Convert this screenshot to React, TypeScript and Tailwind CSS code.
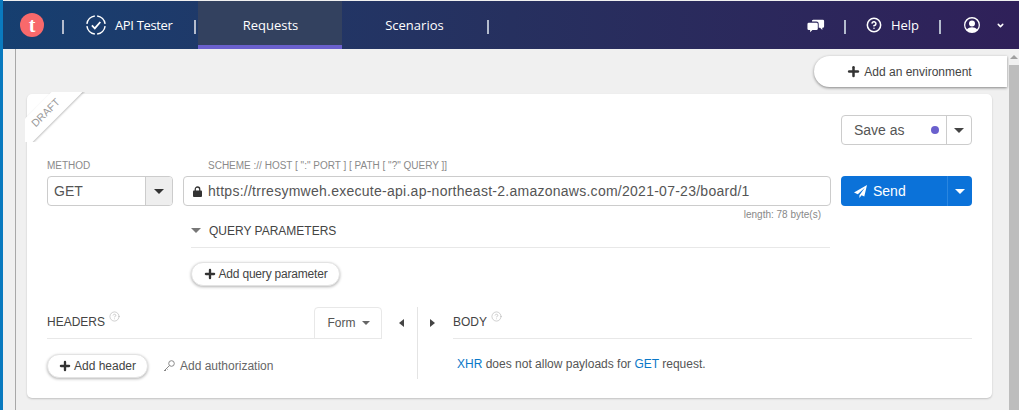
import { ChevronDown, CircleHelp, Plus } from 'lucide-react';

const sans = "font-['Liberation_Sans',Arial,sans-serif]";
const nav = "font-['Open_Sans','Noto_Sans',sans-serif]";

function Caret({ className = '' }: { className?: string }) {
  return <span className={`inline-block w-0 h-0 border-x-[5px] border-x-transparent border-t-[5px] ${className}`} />;
}

function Sep({ className = '' }: { className?: string }) {
  return <span className={`block w-[2px] h-[14px] mt-[3px] bg-[#b4bccd] ${className}`} />;
}

function PillButton({ label, className = '' }: { label: string; className?: string }) {
  return (
    <button className={`flex items-center justify-center gap-[2px] pr-px h-[24px] rounded-full bg-white border border-[#e3e3e3] shadow-[0_1px_3px_rgba(0,0,0,0.3)] text-[#444] text-[12px] ${className}`}>
      <Plus size={14} strokeWidth={4} className="text-[#333]" />
      {label}
    </button>
  );
}

function HelpDot() {
  return <CircleHelp size={11} strokeWidth={1.2} className="text-[#aaa] mb-[9px]" />;
}

function Header() {
  return (
    <header className={`${nav} flex items-center h-[48px] mt-px text-white text-[13px] font-medium bg-gradient-to-r from-[#163f70] via-[#26305f] to-[#2f2059]`}>
      <span className="ml-[17px] w-[24px] h-[24px] rounded-full bg-[#f8696b] flex items-center justify-center font-['Liberation_Serif',serif] font-bold text-[20px] leading-none">t</span>
      <Sep className="ml-[18px]" />
      <svg viewBox="0 0 24 24" width="22" height="22" className="ml-[21px]" fill="none" stroke="white" strokeWidth="1.6">
        <path d="M12 2a10 10 0 0 1 10 10M22 12a10 10 0 0 1-10 10M12 22A10 10 0 0 1 2 12M2 12A10 10 0 0 1 12 2" strokeDasharray="13 2.7" strokeDashoffset="-1.3" />
        <path d="M7.5 12.5l3.2 3.2 6-7" strokeWidth="2" />
      </svg>
      <span className="ml-[8px] pt-px tracking-[-0.35px]">API Tester</span>
      <Sep className="ml-[22px]" />
      <nav className="ml-[2px] flex items-stretch self-stretch">
        <span className="w-[144px] flex items-center justify-center bg-[#33415f] border-b-[4px] border-[#6a60cd] pt-[5px]">Requests</span>
        <span className="w-[144px] flex items-center justify-center pt-px">Scenarios</span>
      </nav>
      <Sep className="ml-px" />
      <div className="ml-auto flex items-center">
        <svg viewBox="0 0 20 16" width="18" height="15" fill="white">
          <path d="M7 1.500h10.500a1.500 1.500 0 0 1 1.500 1.500v6a1.500 1.500 0 0 1-1.500 1.500H17v2.500L14.500 10.500H13V6a2.500 2.500 0 0 0-2.500-2.500H5.600A1.500 1.500 0 0 1 7 1.500z" />
          <path d="M2 5h8.500A1.500 1.500 0 0 1 12 6.500v5a1.500 1.500 0 0 1-1.500 1.500H6l-2.500 2.500V13H2a1.500 1.500 0 0 1-1.500-1.500v-5A1.500 1.500 0 0 1 2 5z" />
        </svg>
        <Sep className="ml-[19px]" />
        <CircleHelp size={16} strokeWidth={2.3} className="ml-[20px]" />
        <span className="ml-[9px] pt-px">Help</span>
        <Sep className="ml-[20px]" />
        <svg viewBox="0 0 16 16" width="16" height="16" className="ml-[23px]" fill="white">
          <path fillRule="evenodd" d="M8 0a8 8 0 1 1 0 16A8 8 0 0 1 8 0zm0 1.400a6.600 6.600 0 0 0-5 10.900C4 11 6 10.300 8 10.300s4 .7 5 2A6.600 6.600 0 0 0 8 1.400zM8 3.500a3 3 0 1 1 0 6 3 3 0 0 1 0-6z" />
        </svg>
        <ChevronDown size={9} strokeWidth={4} className="ml-[16px] mr-[14px]" />
      </div>
    </header>
  );
}

function UrlRow() {
  return (
    <div className="flex mt-[15px]">
      <div className="w-[126px]">
        <div className="text-[10px] leading-[12px] text-[#8a8a8a] h-[14px]">METHOD</div>
        <div className="mt-[2px] h-[30px] flex border border-[#ccc] rounded-[4px] overflow-hidden text-[14px] text-[#555]">
          <span className="flex-1 flex items-center pl-[6px]">GET</span>
          <span className="w-[27px] flex items-center justify-center bg-[#eee] border-l border-[#ccc]"><Caret className="border-t-[#333]" /></span>
        </div>
      </div>
      <div className="ml-[10px] w-[648px]">
        <div className="text-[10px] leading-[12px] text-[#8a8a8a] h-[14px] pl-[25px]">SCHEME :// HOST [ ":" PORT ] [ PATH [ "?" QUERY ]]</div>
        <div className="mt-[2px] h-[30px] flex items-center border border-[#ccc] rounded-[4px] text-[14px] text-[#555]">
          <svg viewBox="0 0 10 12" width="9" height="11" className="ml-[9px]" fill="#333">
            <path d="M1 5h8a1 1 0 0 1 1 1v5a1 1 0 0 1-1 1H1a1 1 0 0 1-1-1V6a1 1 0 0 1 1-1z" />
            <path d="M2.500 5.500V3.500a2.500 2.500 0 0 1 5 0v2" fill="none" stroke="#333" strokeWidth="1.400" />
          </svg>
          <span className="ml-[6px] tracking-[0.26px]">https://trresymweh.execute-api.ap-northeast-2.amazonaws.com/2021-07-23/board/1</span>
        </div>
        <div className="text-right text-[10px] leading-[12px] text-[#888] pr-[10px] mt-[3px]">length: 78 byte(s)</div>
      </div>
      <div className="ml-[10px] mt-[16px] w-[131px] h-[30px] flex rounded-[4px] bg-[#0b72d9] text-white text-[14px]">
        <span className="flex-1 flex items-center pl-[13px] gap-[6px]">
          <svg viewBox="0 0 12 12" width="13" height="13" fill="white"><path d="M12 0L0 7l3.500 1.500L10 2.500 5 9.500V12l2-2.500 2.500 1z" /></svg>
          Send
        </span>
        <span className="w-[25px] flex items-center justify-center border-l border-[#2a86e0]"><Caret className="border-t-white" /></span>
      </div>
    </div>
  );
}

export default function App() {
  return (
    <div className={`${sans} w-[1019px] h-[410px] overflow-hidden flex bg-[#f0f0f0]`}>
      <div className="w-[3px] h-full bg-[#0a7abf] shrink-0" />
      <div className="flex-1 min-w-0 flex flex-col">
        <Header />
        <div className="flex-1 min-h-0 flex">
          <div className="w-[12px] shrink-0" />
          <div className="w-px bg-[#a8a8a8] shrink-0" />
          <main className="flex-1 min-w-0">
            <div className="flex justify-end mt-[7px] mr-[2px]">
              <button className="w-[193px] h-[31px] flex items-center justify-center gap-[3px] pr-[3px] bg-white rounded-l-full shadow-[0_1px_3px_rgba(0,0,0,0.45)] text-[12px] text-[#444]">
                <Plus size={15} strokeWidth={4} className="text-[#333]" />
                Add an environment
              </button>
            </div>
            <section className="relative ml-[11px] mt-[7px] w-[965px] h-[304px] bg-white rounded-[5px] shadow-[0_1px_2px_rgba(0,0,0,0.2)] px-[20px] pt-[21px]">
              <div className="absolute -left-[2px] -top-[2px] w-[60px] h-[50px] overflow-hidden pointer-events-none">
                <div className="absolute left-[-29px] top-[10px] w-[100px] h-[22px] bg-white -rotate-45 shadow-[0_1px_2px_rgba(0,0,0,0.25)] flex items-center justify-center text-[10.5px] text-[#999]">DRAFT</div>
              </div>
              <div className="flex justify-end">
                <div className="w-[131px] h-[30px] flex border border-[#ccc] rounded-[4px] text-[14px] text-[#555]">
                  <span className="flex-1 flex items-center pl-[12px]">Save as</span>
                  <span className="w-[8px] h-[8px] rounded-full bg-[#6a60cd] self-center mr-[7px]" />
                  <span className="w-[25px] flex items-center justify-center border-l border-[#ccc]"><Caret className="border-t-[#444]" /></span>
                </div>
              </div>
              <UrlRow />
              <div className="ml-[144px] w-[639px]">
                <div className="flex items-center h-[32px] pb-[2px] border-b border-[#e8e8e8] text-[12px] text-[#444] -mt-[5px]">
                  <Caret className="border-t-[#777] mr-[8px]" />
                  QUERY PARAMETERS
                </div>
                <PillButton label="Add query parameter" className="w-[149px] mt-[14px] tracking-[-0.2px]" />
              </div>
              <div className="flex mt-[21px]">
                <div className="w-[335px]">
                  <div className="flex items-end h-[32px] border-b border-[#e8e8e8]">
                    <span className="flex items-end gap-[4px] text-[12px] text-[#444] pb-[7px]">HEADERS <HelpDot /></span>
                    <span className="ml-auto w-[68px] h-[32px] -mb-px flex items-center justify-center gap-[6px] pl-px border border-[#e8e8e8] rounded-t-[4px] text-[12px] text-[#555]">
                      Form <span className="inline-block w-0 h-0 border-x-[4px] border-x-transparent border-t-[4px] border-t-[#666]" />
                    </span>
                  </div>
                  <div className="flex items-center mt-[15px]">
                    <PillButton label="Add header" className="w-[101px]" />
                    <svg viewBox="0 0 12 12" width="12" height="12" className="ml-[15px]" fill="none" stroke="#888" strokeWidth="1">
                      <circle cx="8.500" cy="3.500" r="2.800" />
                      <path d="M6.500 5.500L1 11M2 10l1 1M3.500 8.500l1 1" />
                    </svg>
                    <span className="ml-[5px] text-[12px] text-[#666]">Add authorization</span>
                  </div>
                </div>
                <div className="w-[71px] flex items-start">
                  <span className="mt-[12px] ml-[17px] w-0 h-0 border-y-[4px] border-y-transparent border-r-[5px] border-r-[#444]" />
                  <span className="ml-[13px] w-px h-[72px] bg-[#e4e4e4]" />
                  <span className="mt-[12px] ml-[12px] w-0 h-0 border-y-[4px] border-y-transparent border-l-[5px] border-l-[#444]" />
                </div>
                <div className="w-[519px]">
                  <div className="flex items-end h-[32px] border-b border-[#e8e8e8] gap-[4px] text-[12px] text-[#444]">
                    <span className="pb-[7px]">BODY</span>
                    <span className="pb-[7px] flex"><HelpDot /></span>
                  </div>
                  <p className="mt-[17px] ml-[4px] text-[12px] leading-[16px] text-[#555]">
                    <span className="text-[#0a78c8]">XHR</span> does not allow payloads for <span className="text-[#0a78c8]">GET</span> request.
                  </p>
                </div>
              </div>
            </section>
          </main>
          <div className="w-[10px] shrink-0 flex flex-col items-center">
            <div className="h-[16px] w-full flex items-center justify-center bg-[#f0f0f0]">
              <span className="w-0 h-0 border-x-[4px] border-x-transparent border-b-[4px] border-b-[#a0a0a0]" />
            </div>
            <div className="flex-1 w-full bg-[#bdbdbd]" />
          </div>
        </div>
      </div>
    </div>
  );
}
